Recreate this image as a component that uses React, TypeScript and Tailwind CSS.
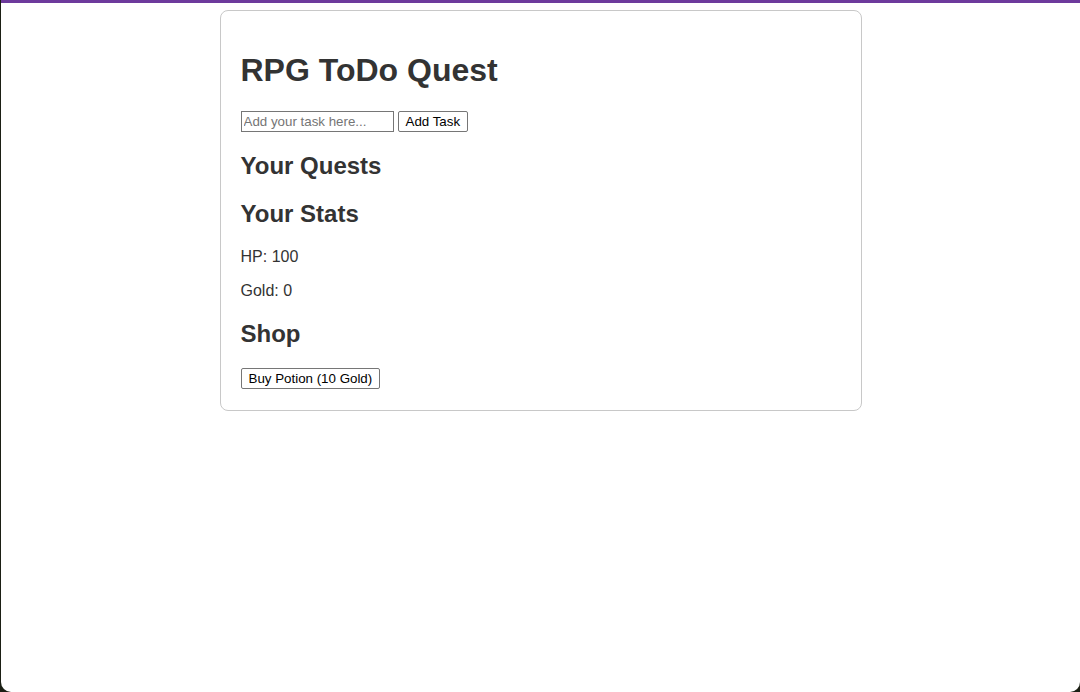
import React, { useState } from 'react';

const App: React.FC = () => {
    const [task, setTask] = useState('');
    const [hp] = useState(100);
    const [gold] = useState(0);

    return (
        <div className="w-[1080px] h-[692px] bg-[#1b1f14] overflow-hidden">
            <div className="ml-[1px] h-[692px] bg-white border-t-[3px] border-[#6d3a9c] rounded-b-[10px] font-['Liberation_Sans',Arial,sans-serif] text-[#333]">
                <div className="w-[642px] mx-auto mt-[7px] px-[20px] pt-[20px] pb-[20px] border border-[#c8c8c8] rounded-[8px]">
                    <h1 className="text-[32px] font-bold leading-[37px] mt-[21px] mb-[22px]">RPG ToDo Quest</h1>

                    <div className="flex items-center gap-[4px] h-[21px]">
                        <input
                            value={task}
                            onChange={(e) => setTask(e.target.value)}
                            placeholder="Add your task here..."
                            className="w-[153px] h-[21px] px-[2px] border border-[#767676] text-[13.33px] text-black placeholder:text-[#757575] outline-none"
                        />
                        <button className="h-[21px] px-[7px] border border-[#767676] rounded-[2px] bg-white text-[13.33px] text-black">
                            Add Task
                        </button>
                    </div>

                    <h2 className="text-[24px] font-bold leading-[28px] mt-[20px] mb-[20px]">Your Quests</h2>
                    <ul></ul>

                    <h2 className="text-[24px] font-bold leading-[28px] mb-[20px]">Your Stats</h2>
                    <p className="text-[16px] leading-[18px]">HP: {hp}</p>
                    <p className="text-[16px] leading-[18px] mt-[16px]">Gold: {gold}</p>

                    <h2 className="text-[24px] font-bold leading-[28px] mt-[20px] mb-[18px]">Shop</h2>
                    <button className="h-[21px] px-[7px] border border-[#767676] rounded-[2px] bg-white text-[13.33px] text-black">
                        Buy Potion (10 Gold)
                    </button>
                </div>
            </div>
        </div>
    );
};

export default App;
